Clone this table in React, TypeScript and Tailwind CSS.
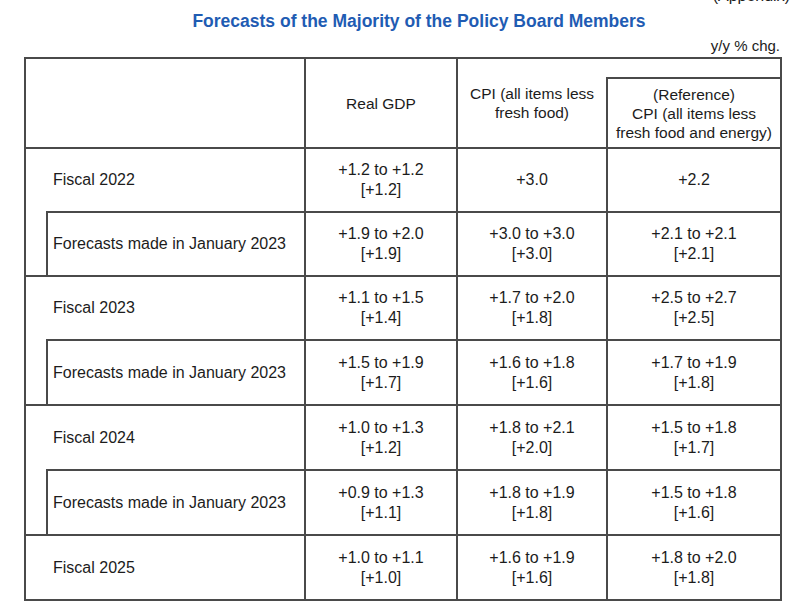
import React from 'react';

type Row = {
    label: string;
    sub: boolean;
    h: string;
    gdp: string[];
    cpi: string[];
    core: string[];
};

const rows: Row[] = [
    { label: 'Fiscal 2022', sub: false, h: 'h-[64px]', gdp: ['+1.2 to +1.2', '[+1.2]'], cpi: ['+3.0'], core: ['+2.2'] },
    { label: 'Forecasts made in January 2023', sub: true, h: 'h-[64px]', gdp: ['+1.9 to +2.0', '[+1.9]'], cpi: ['+3.0 to +3.0', '[+3.0]'], core: ['+2.1 to +2.1', '[+2.1]'] },
    { label: 'Fiscal 2023', sub: false, h: 'h-[64px]', gdp: ['+1.1 to +1.5', '[+1.4]'], cpi: ['+1.7 to +2.0', '[+1.8]'], core: ['+2.5 to +2.7', '[+2.5]'] },
    { label: 'Forecasts made in January 2023', sub: true, h: 'h-[65px]', gdp: ['+1.5 to +1.9', '[+1.7]'], cpi: ['+1.6 to +1.8', '[+1.6]'], core: ['+1.7 to +1.9', '[+1.8]'] },
    { label: 'Fiscal 2024', sub: false, h: 'h-[65px]', gdp: ['+1.0 to +1.3', '[+1.2]'], cpi: ['+1.8 to +2.1', '[+2.0]'], core: ['+1.5 to +1.8', '[+1.7]'] },
    { label: 'Forecasts made in January 2023', sub: true, h: 'h-[65px]', gdp: ['+0.9 to +1.3', '[+1.1]'], cpi: ['+1.8 to +1.9', '[+1.8]'], core: ['+1.5 to +1.8', '[+1.6]'] },
    { label: 'Fiscal 2025', sub: false, h: 'h-[65px]', gdp: ['+1.0 to +1.1', '[+1.0]'], cpi: ['+1.6 to +1.9', '[+1.6]'], core: ['+1.8 to +2.0', '[+1.8]'] },
];

const Cell = ({ lines, w }: { lines: string[]; w: string }) => (
    <div className={`${w} border-l-2 border-t-2 border-[#4a4a4a] flex flex-col items-center justify-center leading-[20px]`}>
        {lines.map((l) => (
            <span key={l}>{l}</span>
        ))}
    </div>
);

export default function App() {
    return (
        <div className="w-[800px] h-[604px] overflow-hidden bg-white text-[#1c1c1c] font-['Liberation_Sans',Arial,sans-serif]">
            <div className="-mt-[12px] h-[16px] leading-[16px] text-[16px] text-right pr-[10px]">(Appendix)</div>
            <div className="mt-[7px] h-[20px] leading-[20px] text-center pl-[38px] text-[17.5px] font-bold text-[#1f5cb3]">
                Forecasts of the Majority of the Policy Board Members
            </div>
            <div className="mt-[7px] h-[16px] leading-[16px] text-right pr-[20px] text-[15px]">y/y % chg.</div>

            <div className="mt-[3px] ml-[24px] w-[758px] border-2 border-[#4a4a4a] text-[16px]">
                {/* header */}
                <div className="flex h-[88px] text-[15.5px] leading-[19px]">
                    <div className="w-[278px]" />
                    <div className="w-[152px] border-l-2 border-[#4a4a4a] flex items-center justify-center">Real GDP</div>
                    <div className="w-[150px] border-l-2 border-[#4a4a4a] flex flex-col items-center justify-center text-center">
                        <span>CPI (all items less</span>
                        <span>fresh food)</span>
                    </div>
                    <div className="w-[174px] mt-[18px] border-l-2 border-t-2 border-[#4a4a4a] flex flex-col items-center justify-center text-center">
                        <span>(Reference)</span>
                        <span>CPI (all items less</span>
                        <span>fresh food and energy)</span>
                    </div>
                </div>

                {rows.map((r, i) => (
                    <div key={i} className={`flex ${r.h}`}>
                        {r.sub ? (
                            <div className="w-[278px] pl-[20px] flex">
                                <div className="flex-1 border-l-2 border-t-2 border-[#4a4a4a] flex items-center pl-[5px]">
                                    {r.label}
                                </div>
                            </div>
                        ) : (
                            <div className="w-[278px] border-t-2 border-[#4a4a4a] flex items-center pl-[27px]">{r.label}</div>
                        )}
                        <Cell lines={r.gdp} w="w-[152px]" />
                        <Cell lines={r.cpi} w="w-[150px]" />
                        <Cell lines={r.core} w="w-[174px]" />
                    </div>
                ))}
            </div>
        </div>
    );
}
